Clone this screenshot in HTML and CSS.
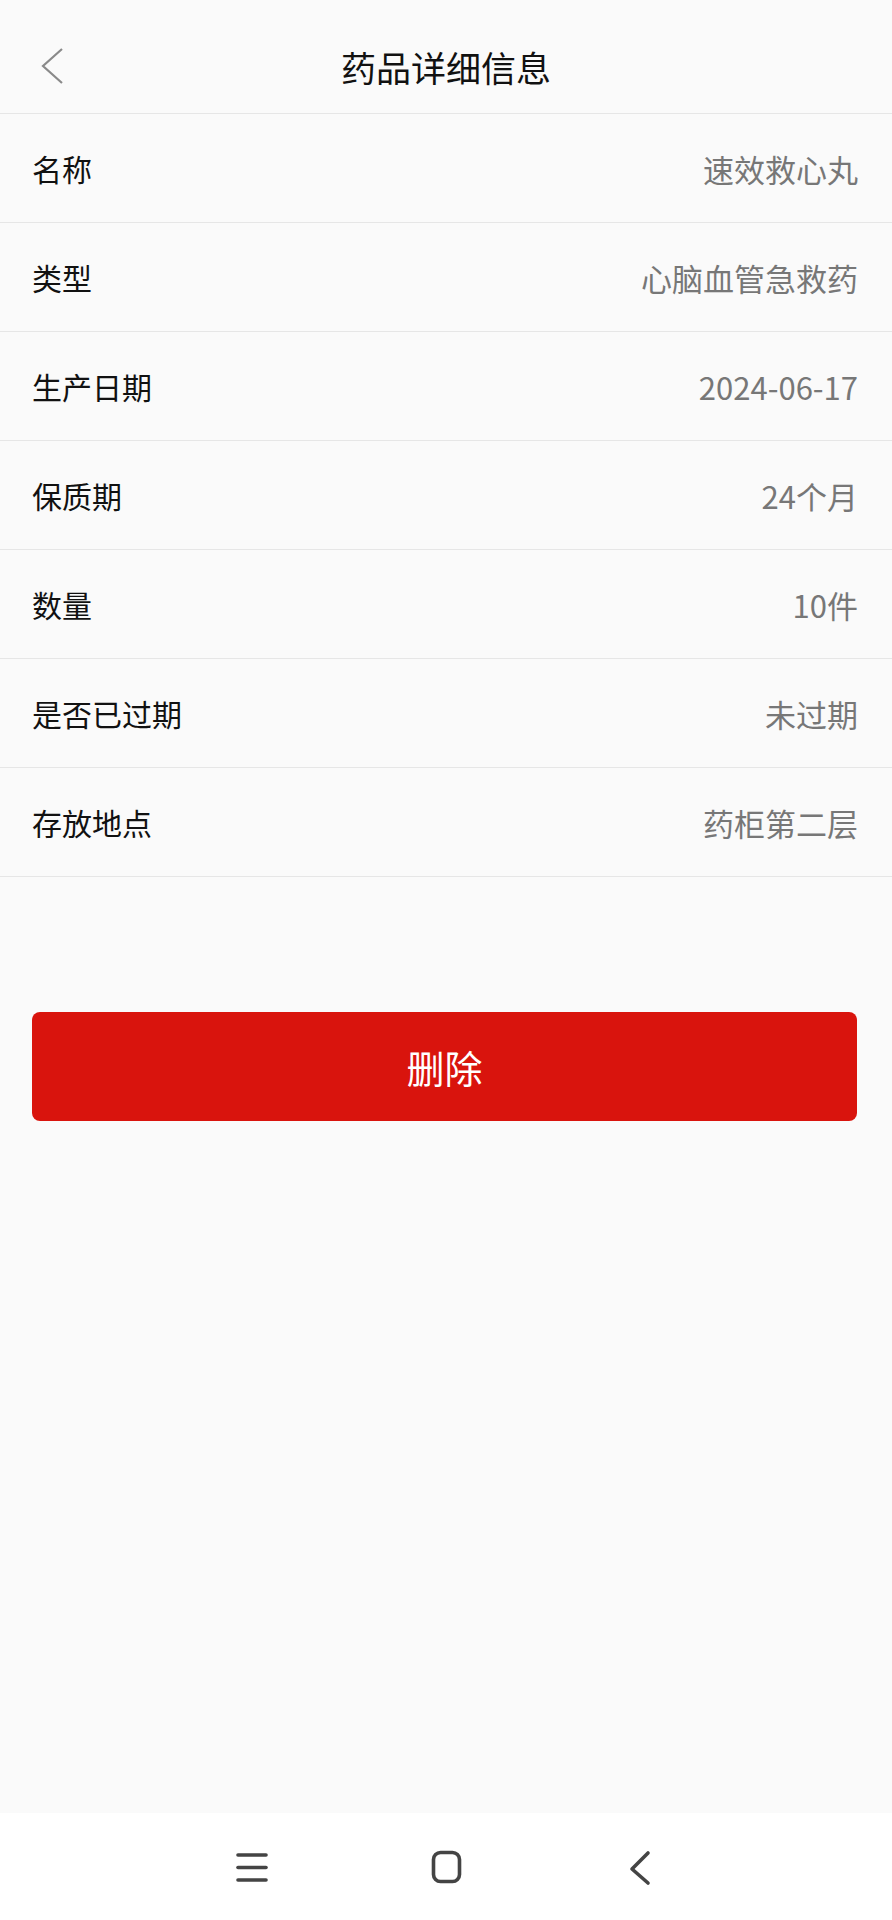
FILE: index.html
```html
<!DOCTYPE html>
<html lang="zh">
<head>
    <meta charset="UTF-8">
    <title>药品详细信息</title>
    <link rel="stylesheet" href="styles.css">
</head>
<body>
    <div class="app">
        <div class="header">
            <span class="back">
                <svg width="30" height="40" viewBox="0 0 30 40">
                    <polyline points="22,3 3,20 22,37" fill="none" stroke="#8a8a8a" stroke-width="2.2"/>
                </svg>
            </span>
            <h1>药品详细信息</h1>
        </div>

        <div class="list">
            <div class="row"><span class="label">名称</span><span class="value">速效救心丸</span></div>
            <div class="row"><span class="label">类型</span><span class="value">心脑血管急救药</span></div>
            <div class="row"><span class="label">生产日期</span><span class="value">2024-06-17</span></div>
            <div class="row"><span class="label">保质期</span><span class="value">24个月</span></div>
            <div class="row"><span class="label">数量</span><span class="value">10件</span></div>
            <div class="row"><span class="label">是否已过期</span><span class="value">未过期</span></div>
            <div class="row"><span class="label">存放地点</span><span class="value">药柜第二层</span></div>
        </div>

        <div class="actions">
            <button type="button" class="button-danger">删除</button>
        </div>

        <div class="navbar">
            <svg width="40" height="40" viewBox="0 0 40 40">
                <g stroke="#444" stroke-width="3.6" stroke-linecap="round">
                    <line x1="6" y1="7" x2="34" y2="7"/>
                    <line x1="6" y1="19.5" x2="34" y2="19.5"/>
                    <line x1="6" y1="32" x2="34" y2="32"/>
                </g>
            </svg>
            <svg width="40" height="40" viewBox="0 0 40 40">
                <rect x="7.5" y="4.5" width="26" height="29" rx="7" fill="none" stroke="#444" stroke-width="3.6"/>
            </svg>
            <svg width="40" height="40" viewBox="0 0 40 40">
                <polyline points="28,5 12,21 28,35" fill="none" stroke="#444" stroke-width="3.6" stroke-linecap="round" stroke-linejoin="round"/>
            </svg>
        </div>
    </div>
</body>
</html>
```

FILE: styles.css
```css
body {
    margin: 0;
    font-family: "Noto Sans CJK SC", "Noto Sans", sans-serif;
    background-color: #fafafa;
}
.app {
    width: 892px;
    height: 1920px;
    display: flex;
    flex-direction: column;
}
.header {
    height: 93px;
    padding-top: 20px;
    border-bottom: 1px solid #e6e6e6;
    display: flex;
    align-items: center;
    justify-content: center;
    position: relative;
}
.back {
    position: absolute;
    left: 40px;
    top: 46px;
    line-height: 0;
}
h1 {
    margin: 0;
    font-size: 35px;
    font-weight: 400;
    color: #111;
}
.row {
    height: 108px;
    border-bottom: 1px solid #e6e6e6;
    display: flex;
    align-items: center;
    justify-content: space-between;
    padding: 0 34px 0 32px;
    font-size: 30px;
}
.label {
    color: #111;
}
.value {
    color: #777;
    font-size: 31px;
}
.actions {
    padding: 135px 35px 0 32px;
}
button {
    width: 100%;
    height: 109px;
    border: none;
    border-radius: 8px;
    background-color: #d9140d;
    color: white;
    font-family: inherit;
    font-size: 38px;
    cursor: pointer;
}
.navbar {
    margin-top: auto;
    height: 107px;
    background-color: #fff;
    display: flex;
    align-items: center;
    justify-content: center;
    gap: 154px;
    padding-top: 2px;
    box-sizing: border-box;
}
```
